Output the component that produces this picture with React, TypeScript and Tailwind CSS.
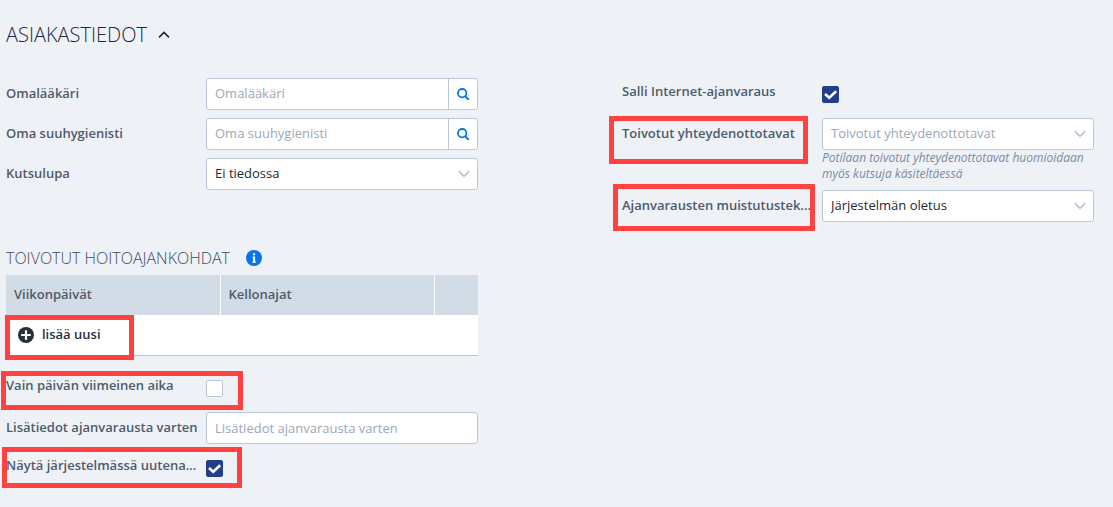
import { useState, type ReactNode } from 'react'
import clsx from 'clsx'

interface RowProps {
  id: string
  label: string
  children: ReactNode
  raised?: boolean
  mark?: string
}

function Row({ id, label, children, raised, mark }: RowProps) {
  return (
    <div className="relative flex items-start">
      <label
        htmlFor={id}
        className={clsx(
          'flex h-8 w-[200px] shrink-0 items-center whitespace-nowrap text-[13px] font-semibold text-[#4e5b6b]',
          raised && 'pb-1',
        )}
      >
        {label}
      </label>
      <div className="min-w-0 flex-1">{children}</div>
      {mark && <Highlight className={mark} />}
    </div>
  )
}

function Highlight({ className }: { className: string }) {
  return <div className={clsx('pointer-events-none absolute border-5 border-[#ff4141]', className)} />
}

function SearchField({ id, placeholder }: { id: string; placeholder: string }) {
  return (
    <div className="flex h-8 rounded-[3px] border border-[#b9c7d8] bg-white">
      <input
        id={id}
        type="text"
        placeholder={placeholder}
        className="min-w-0 flex-1 rounded-l-[3px] px-2 text-[13px] text-[#1f2733] outline-none placeholder:text-[#9aa8b8]"
      />
      <button
        type="button"
        aria-label={`Hae ${placeholder}`}
        className="flex w-[29px] items-center justify-center border-l border-[#b9c7d8] text-[#0a74e6]"
      >
        <svg viewBox="0 0 12 12" className="size-3" fill="none" stroke="currentColor">
          <circle cx="5.2" cy="5.2" r="4.2" strokeWidth="1.8" />
          <path d="M8.4 8.4 11.2 11.2" strokeWidth="2" strokeLinecap="round" />
        </svg>
      </button>
    </div>
  )
}

function SelectField({ id, value, muted }: { id: string; value: string; muted?: boolean }) {
  return (
    <div className="relative">
      <select
        id={id}
        className={clsx(
          'block h-8 w-full appearance-none rounded-[3px] border border-[#b9c7d8] bg-white pr-8 pl-2 text-[13px]',
          muted ? 'text-[#9aa8b8]' : 'text-[#1f2733]',
        )}
      >
        <option>{value}</option>
      </select>
      <svg
        viewBox="0 0 12 8"
        className="pointer-events-none absolute top-3 right-2 h-2 w-3"
        fill="none"
        stroke="#b9c7d8"
        strokeWidth="1.8"
      >
        <path d="M0.8 1.2 6 6.2 11.2 1.2" />
      </svg>
    </div>
  )
}

function CheckField({ id, initial = false }: { id: string; initial?: boolean }) {
  const [checked, setChecked] = useState(initial)

  return (
    <div className="flex h-8 items-center">
      <div className="relative size-[17px]">
        <input
          id={id}
          type="checkbox"
          checked={checked}
          onChange={(e) => setChecked(e.target.checked)}
          className="block size-[17px] appearance-none rounded-[2px] border border-[#b9c7d8] bg-white checked:border-[#233e8b] checked:bg-[#233e8b]"
        />
        {checked && (
          <svg
            viewBox="0 0 17 17"
            className="pointer-events-none absolute inset-0"
            fill="none"
            stroke="white"
            strokeWidth="2.6"
          >
            <path d="M3 8 7.2 11.8 14.2 5.2" />
          </svg>
        )}
      </div>
    </div>
  )
}

export default function App() {
  const [open, setOpen] = useState(true)

  return (
    <main className="min-h-screen bg-[#eef2f7] pt-5 pr-[19px] pb-6 pl-[6px] font-['Open_Sans','Noto_Sans',sans-serif]">
      <h1 className="text-[20px] leading-[30px] font-light text-[#1f2733]">
        <button type="button" onClick={() => setOpen(!open)} className="flex items-center gap-[11px]">
          ASIAKASTIEDOT
          <svg viewBox="0 0 12 8" className="h-2 w-3" fill="none" stroke="currentColor" strokeWidth="1.6">
            <path d="M1 6.4 6 1.4 11 6.4" />
          </svg>
        </button>
      </h1>

      {open && (
        <div className="mt-7 grid grid-cols-2 gap-x-36">
          <div>
            <div className="flex flex-col gap-2">
              <Row id="doctor" label="Omalääkäri">
                <SearchField id="doctor" placeholder="Omalääkäri" />
              </Row>
              <Row id="hygienist" label="Oma suuhygienisti">
                <SearchField id="hygienist" placeholder="Oma suuhygienisti" />
              </Row>
              <Row id="recall" label="Kutsulupa">
                <SelectField id="recall" value="Ei tiedossa" />
              </Row>
            </div>

            <h2 className="mt-14 flex h-[29px] items-start gap-4 text-[16px] leading-6 font-light text-[#3f4b5a]">
              TOIVOTUT HOITOAJANKOHDAT
              <svg viewBox="0 0 16 16" className="mt-1 size-4">
                <circle cx="8" cy="8" r="8" fill="#0a74e6" />
                <path d="M7 3.2h2.1v2H7zM6.6 6.5h2.5v5h.7v1.2H6.4v-1.2h.7V7.7h-.5z" fill="white" />
              </svg>
            </h2>

            <div className="relative">
              <table className="w-full table-fixed border-separate border-spacing-0 border-b border-[#b9c7d8] bg-white text-[13px]">
                <thead>
                  <tr className="h-10 bg-[#d2dce6] text-left text-[#4e5b6b]">
                    <th className="border-r border-white px-2 font-semibold">Viikonpäivät</th>
                    <th className="border-r border-white px-2 font-semibold">Kellonajat</th>
                    <th className="w-[43px]" />
                  </tr>
                </thead>
                <tbody>
                  <tr className="h-10">
                    <td colSpan={3} className="px-3">
                      <button type="button" className="flex items-center gap-2 font-semibold text-[#27303d]">
                        <svg viewBox="0 0 16 16" className="size-4">
                          <circle cx="8" cy="8" r="8" fill="#27303d" />
                          <path d="M8 3.2v9.6M3.2 8h9.6" stroke="white" strokeWidth="2.2" />
                        </svg>
                        lisää uusi
                      </button>
                    </td>
                  </tr>
                </tbody>
              </table>
              <Highlight className="top-10 -left-px h-[45px] w-[129px]" />
            </div>

            <div className="mt-4 flex flex-col gap-2">
              <Row id="last-slot" label="Vain päivän viimeinen aika" raised mark="-top-px -left-[5px] h-[39px] w-[242px]">
                <CheckField id="last-slot" />
              </Row>
              <Row id="details" label="Lisätiedot ajanvarausta varten">
                <input
                  id="details"
                  type="text"
                  placeholder="Lisätiedot ajanvarausta varten"
                  className="block h-8 w-full rounded-[3px] border border-[#b9c7d8] bg-white px-2 text-[13px] text-[#1f2733] outline-none placeholder:text-[#9aa8b8]"
                />
              </Row>
              <Row id="show-new" label="Näytä järjestelmässä uutena..." raised mark="-top-[5px] -left-1 h-[41px] w-[240px]">
                <CheckField id="show-new" initial />
              </Row>
            </div>
          </div>

          <div className="flex flex-col gap-2">
            <Row id="internet" label="Salli Internet-ajanvaraus" raised>
              <CheckField id="internet" initial />
            </Row>
            <Row id="contact" label="Toivotut yhteydenottotavat" mark="-top-[2px] -left-[13px] h-12 w-[199px]">
              <SelectField id="contact" value="Toivotut yhteydenottotavat" muted />
              <p className="text-[12px] leading-4 text-[#7a8a9c] italic">
                Potilaan toivotut yhteydenottotavat huomioidaan myös kutsuja käsiteltäessä
              </p>
            </Row>
            <Row id="reminder" label="Ajanvarausten muistutustek..." mark="-top-[6px] -left-[9px] h-[47px] w-[202px]">
              <SelectField id="reminder" value="Järjestelmän oletus" />
            </Row>
          </div>
        </div>
      )}
    </main>
  )
}
